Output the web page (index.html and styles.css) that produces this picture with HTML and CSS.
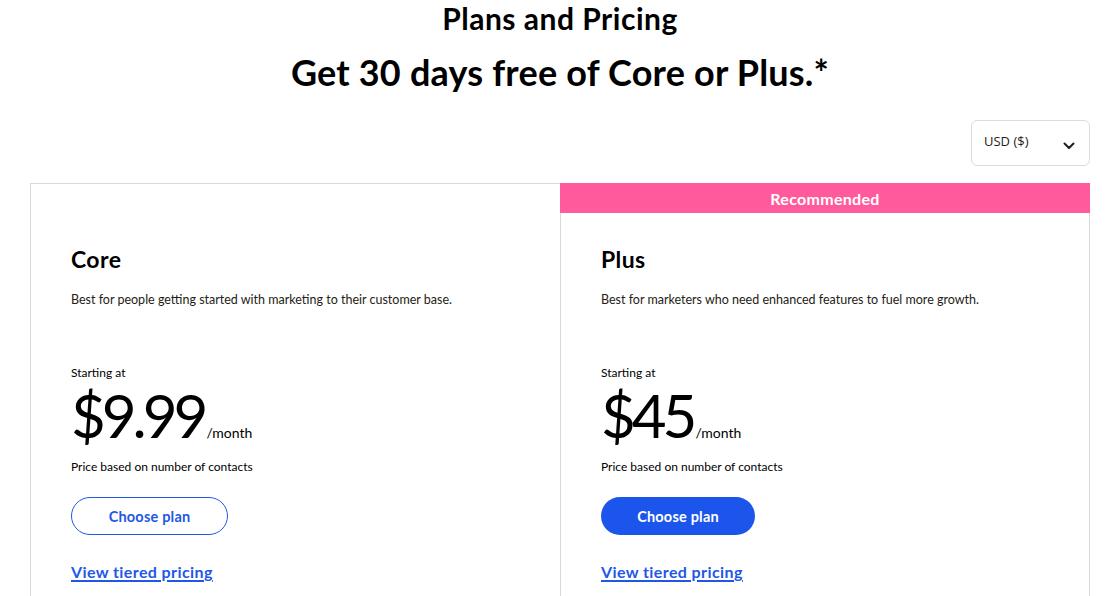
FILE: index.html
```html
<!DOCTYPE html>
<html>
  <head>
    <meta charset="utf-8" />
    <link rel="stylesheet" href="styles.css">
  </head>
  <body>
    <div class="page">
      <h1 class="title">Plans and Pricing</h1>
      <h2 class="subtitle">Get 30 days free of Core or Plus.*</h2>
      <div class="toolbar">
        <div class="currency">
          <span>USD ($)</span>
          <svg width="12" height="8" viewBox="0 0 12 8"><path d="M1.5 1.5 L6 6 L10.5 1.5" fill="none" stroke="#241c15" stroke-width="2" stroke-linecap="round" stroke-linejoin="round"/></svg>
        </div>
      </div>
      <div class="plans">
        <div class="plan">
          <div class="banner blank"></div>
          <div class="body">
            <div class="name">Core</div>
            <div class="desc">Best for people getting started with marketing to their customer base.</div>
            <div class="starting">Starting at</div>
            <div class="price"><span class="amount">$9.99</span><span class="per">/month</span></div>
            <div class="note">Price based on number of contacts</div>
            <a class="btn outline">Choose plan</a>
            <a class="tiers">View tiered pricing</a>
          </div>
        </div>
        <div class="plan featured">
          <div class="banner">Recommended</div>
          <div class="body">
            <div class="name">Plus</div>
            <div class="desc">Best for marketers who need enhanced features to fuel more growth.</div>
            <div class="starting">Starting at</div>
            <div class="price"><span class="amount">$45</span><span class="per">/month</span></div>
            <div class="note">Price based on number of contacts</div>
            <a class="btn solid">Choose plan</a>
            <a class="tiers">View tiered pricing</a>
          </div>
        </div>
      </div>
    </div>
  </body>
</html>
```

FILE: styles.css
```css
html,
body {
  margin: 0;
  padding: 0;
  background: #fff;
  color: #000;
  font-family: Lato, "Noto Sans", sans-serif;
}
.page {
  width: 1060px;
  margin-left: 30px;
}
.title {
  margin: 0;
  padding-top: 0;
  text-align: center;
  font-size: 30px;
  line-height: 36px;
  font-weight: 700;
  letter-spacing: 0.5px;
}
.subtitle {
  margin: 0;
  padding-top: 14px;
  text-align: center;
  font-size: 36px;
  line-height: 44px;
  font-weight: 700;
  letter-spacing: 0.2px;
}
.toolbar {
  display: flex;
  justify-content: flex-end;
  padding-top: 26px;
  padding-bottom: 17px;
}
.currency {
  width: 119px;
  height: 46px;
  box-sizing: border-box;
  border: 1px solid #dcdcdc;
  border-radius: 6px;
  display: flex;
  align-items: center;
  justify-content: space-between;
  padding: 0 14px 0 12px;
  font-family: "Open Sans", sans-serif;
  font-size: 13px;
  color: #241c15;
}
.currency span {
  margin-top: -4px;
}
.currency svg {
  margin-top: 6px;
}
.plans {
  display: grid;
  grid-template-columns: 531px 529px;
}
.plan {
  border: 1px solid #d9d9d9;
  border-bottom: none;
  height: 420px;
}
.featured {
  margin-left: -1px;
  width: 528px;
}
.banner {
  height: 30px;
  background: #ff5a9c;
  color: #fff;
  font-size: 16px;
  font-weight: 700;
  text-align: center;
  line-height: 31px;
  letter-spacing: 0.3px;
}
.featured .banner {
  margin: -1px -1px 0 -1px;
  height: 30px;
}
.banner.blank {
  background: none;
  height: 29px;
}
.body {
  padding: 32px 40px 0 40px;
}
.name {
  font-size: 23px;
  font-weight: 700;
  line-height: 28px;
  letter-spacing: 0.4px;
}
.desc {
  font-size: 12.5px;
  line-height: 18px;
  margin-top: 18px;
  color: #241c15;
}
.starting {
  font-size: 12px;
  line-height: 18px;
  margin-top: 55px;
}
.price {
  display: flex;
  align-items: baseline;
  margin-top: 4px;
}
.amount {
  font-size: 60px;
  font-weight: 400;
  line-height: 58px;
  letter-spacing: -4px;
  margin-right: 2px;
}
.per {
  font-size: 14px;
}
.note {
  font-size: 12px;
  line-height: 18px;
  margin-top: 14px;
}
.btn {
  display: inline-flex;
  align-items: center;
  justify-content: center;
  box-sizing: border-box;
  height: 38px;
  border-radius: 19px;
  font-size: 14.5px;
  font-weight: 700;
  margin-top: 21px;
  letter-spacing: 0.2px;
}
.outline {
  width: 157px;
  border: 1px solid #1f57e7;
  color: #1f57e7;
}
.solid {
  width: 154px;
  background: #1c55eb;
  color: #fff;
}
.tiers {
  display: block;
  margin-top: 27px;
  font-size: 16px;
  font-weight: 700;
  color: #1f57e7;
  text-decoration: underline;
  text-decoration-thickness: 2px;
  text-underline-offset: 2px;
  letter-spacing: 0.4px;
}
```
